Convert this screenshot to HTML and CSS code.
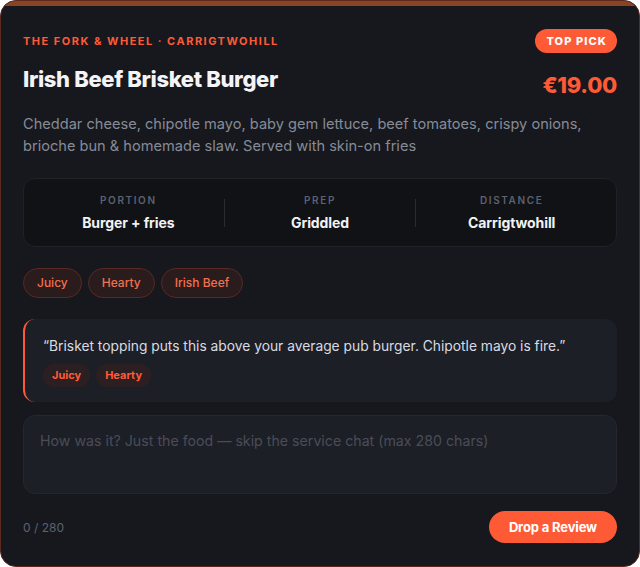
FILE: index.html
```html
<!DOCTYPE html>
<html>
<head>
<meta charset="utf-8">
<link rel="stylesheet" href="styles.css">
</head>
<body>
<div class="card">
  <div class="accent"></div>
  <div class="content">
    <div class="head">
      <div class="venue">The Fork &amp; Wheel · Carrigtwohill</div>
      <div class="badge">Top Pick</div>
    </div>
    <div class="title-row">
      <h1 class="title">Irish Beef Brisket Burger</h1>
      <div class="price">€19.00</div>
    </div>
    <p class="desc">Cheddar cheese, chipotle mayo, baby gem lettuce, beef tomatoes, crispy onions, brioche bun &amp; homemade slaw. Served with skin-on fries</p>
    <div class="stats">
      <div class="stat"><div class="stat-label">Portion</div><div class="stat-value">Burger + fries</div></div>
      <div class="divider"></div>
      <div class="stat"><div class="stat-label">Prep</div><div class="stat-value">Griddled</div></div>
      <div class="divider"></div>
      <div class="stat"><div class="stat-label">Distance</div><div class="stat-value">Carrigtwohill</div></div>
    </div>
    <div class="tags">
      <span class="tag">Juicy</span>
      <span class="tag">Hearty</span>
      <span class="tag">Irish Beef</span>
    </div>
    <div class="review">
      <p class="quote">“Brisket topping puts this above your average pub burger. Chipotle mayo is fire.”</p>
      <div class="chips">
        <span class="chip">Juicy</span>
        <span class="chip">Hearty</span>
      </div>
    </div>
    <textarea class="input" placeholder="How was it? Just the food — skip the service chat (max 280 chars)"></textarea>
    <div class="footer">
      <span class="count">0 / 280</span>
      <button class="btn">Drop a Review</button>
    </div>
  </div>
</div>
</body>
</html>
```

FILE: styles.css
```css
* { box-sizing: border-box; }
html, body { margin: 0; padding: 0; background: #ffffff; }
body { font-family: Inter, "Noto Sans", sans-serif; }

.card {
  width: 640px;
  height: 567px;
  background: #17181d;
  border: 1px solid #5c2820;
  border-radius: 16px;
  overflow: hidden;
  display: flex;
  flex-direction: column;
}
.accent {
  height: 5px;
  background: #8a4324;
  flex: none;
}
.content {
  padding: 23px 22px 0 22px;
  display: flex;
  flex-direction: column;
}
.head {
  display: flex;
  justify-content: space-between;
  align-items: center;
  height: 24px;
}
.venue {
  color: #ff5a36;
  font-size: 11px;
  font-weight: 700;
  letter-spacing: 1.5px;
  text-transform: uppercase;
}
.badge {
  background: #ff5a36;
  color: #ffffff;
  font-size: 11px;
  font-weight: 800;
  letter-spacing: 1.1px;
  text-transform: uppercase;
  height: 24px;
  line-height: 24px;
  padding: 0 10px 0 11px;
  border-radius: 12px;
}
.title-row {
  display: flex;
  justify-content: space-between;
  align-items: flex-end;
  margin-top: 11px;
}
.title {
  margin: 0;
  color: #f4f4f6;
  font-size: 22px;
  font-weight: 800;
  letter-spacing: -0.35px;
  line-height: 30px;
}
.price {
  color: #ff5a36;
  font-size: 22px;
  font-weight: 800;
  letter-spacing: -0.3px;
  line-height: 30px;
  margin-bottom: -6px;
}
.desc {
  margin: 19px 0 0 0;
  color: #868b98;
  font-size: 14.6px;
  line-height: 22px;
}
.stats {
  margin-top: 21px;
  background: #111216;
  border: 1px solid #202228;
  border-radius: 12px;
  height: 69px;
  padding: 0 9px;
  display: grid;
  grid-template-columns: 1fr 1px 1fr 1px 1fr;
  align-items: center;
}
.stat {
  text-align: center;
}
.stat-label {
  color: #5d6170;
  font-size: 10px;
  font-weight: 600;
  letter-spacing: 1.6px;
  text-transform: uppercase;
  line-height: 14px;
}
.stat-value {
  color: #f2f2f4;
  font-size: 14px;
  font-weight: 700;
  letter-spacing: -0.1px;
  line-height: 20px;
  margin-top: 6px;
}
.divider {
  width: 1px;
  height: 28px;
  background: #2a2c33;
}
.tags {
  display: flex;
  gap: 6px;
  margin-top: 21px;
}
.tag {
  height: 30px;
  line-height: 28px;
  padding: 0 13px;
  border-radius: 15px;
  background: #2a1b1c;
  border: 1px solid #5a2922;
  color: #f0714f;
  font-size: 12px;
  font-weight: 500;
}
.review {
  margin-top: 21px;
  background: #1d1f26;
  border-radius: 12px;
  border-left: 2px solid #ff5a36;
  padding: 16px 18px 15px 18px;
  height: 83px;
}
.quote {
  margin: 0;
  color: #d9dbe1;
  font-size: 13.8px;
  line-height: 22px;
}
.chips {
  display: flex;
  gap: 6px;
  margin-top: 7px;
}
.chip {
  height: 23px;
  line-height: 23px;
  padding: 0 9px;
  border-radius: 12px;
  background: #2c1f21;
  color: #ff5a36;
  font-size: 11px;
  font-weight: 700;
}
.input {
  margin-top: 13px;
  height: 79px;
  width: 100%;
  background: #1d1f26;
  border: 1px solid #25272e;
  border-radius: 12px;
  padding: 15px 16px;
  resize: none;
  font-family: Inter, "Noto Sans", sans-serif;
  font-size: 14.2px;
  line-height: 20px;
  color: #d9dbe1;
  outline: none;
}
.input::placeholder { color: #4a4d58; }
.footer {
  display: flex;
  justify-content: space-between;
  align-items: center;
  margin-top: 17px;
}
.count {
  color: #5d6170;
  font-size: 12px;
}
.btn {
  background: #ff5a36;
  color: #ffffff;
  border: none;
  border-radius: 16px;
  height: 32px;
  padding: 0 20px;
  font-family: Inter, "Noto Sans", sans-serif;
  font-size: 13px;
  font-weight: 700;
  letter-spacing: -0.15px;
}
```
